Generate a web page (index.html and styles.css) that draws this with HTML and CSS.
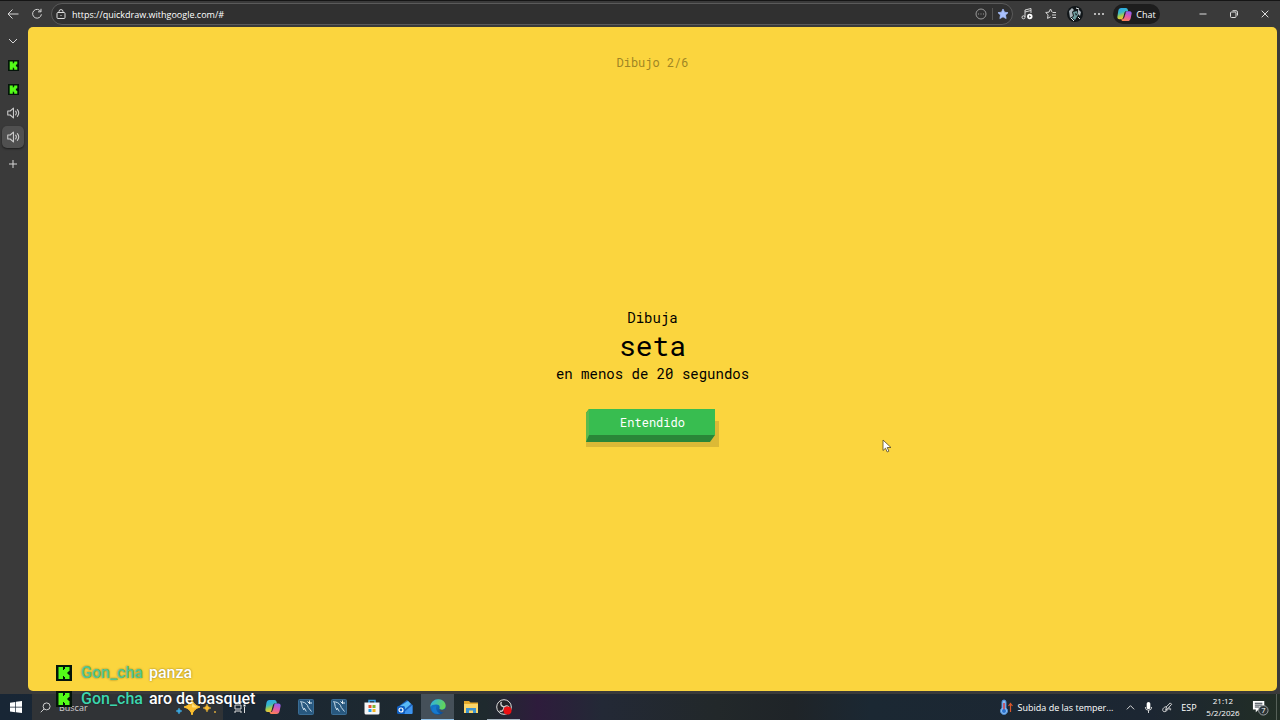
FILE: index.html
```html
<!DOCTYPE html>
<html lang="es">
<head>
  <meta charset="UTF-8" />
  <meta name="viewport" content="width=device-width, initial-scale=1.0" />
  <title>Quick, Draw!</title>
  <link rel="stylesheet" href="styles.css">
</head>
<body>
  <!-- shared icons -->
  <svg class="defs" width="0" height="0" aria-hidden="true">
    <defs>
      <linearGradient id="copA" x1="0" y1="0" x2="0.3" y2="1">
        <stop offset="0" stop-color="#2aa4ee" /><stop offset="0.45" stop-color="#38b8c8" /><stop offset="0.75" stop-color="#a8cf4a" /><stop offset="1" stop-color="#f5c43a" />
      </linearGradient>
      <linearGradient id="copB" x1="0.6" y1="0" x2="0.3" y2="1">
        <stop offset="0" stop-color="#8f62f0" /><stop offset="0.5" stop-color="#e35aa8" /><stop offset="1" stop-color="#fb8450" />
      </linearGradient>
      <linearGradient id="edgeA" x1="0" y1="0" x2="1" y2="0.3">
        <stop offset="0" stop-color="#2db0ea" /><stop offset="1" stop-color="#62d45a" />
      </linearGradient>
      <linearGradient id="edgeB" x1="0" y1="0" x2="0.6" y2="1">
        <stop offset="0" stop-color="#1a8fe0" /><stop offset="1" stop-color="#0c4f9c" />
      </linearGradient>
      <symbol id="kick" viewBox="0 0 16 16">
        <rect width="16" height="16" fill="#04140a" />
        <path d="M2.500 2h4.500v3h1V4h1V2h4.500v4h-1v1h-1v2h1v1h1v4H9v-2H8v-1H7v3H2.500z" fill="#53fc18" />
      </symbol>
      <symbol id="speaker" viewBox="0 0 16 16">
        <path d="M2 5.700h2.800L8.500 2.400v11.200L4.800 10.300H2zM11 5.800c1 1.300 1 3.100 0 4.400M13 4.200c1.900 2.300 1.900 5.300 0 7.600" fill="none" stroke="currentColor" stroke-width="1.200" stroke-linejoin="round" stroke-linecap="round" />
      </symbol>
      <symbol id="copilot" viewBox="0 0 16 16">
        <path d="M4.500 1h5c1.200 0 1.700.8 2 1.800L12 4.500H9.800c-1 0-1.500.6-1.800 1.500L6.500 11.500c-.3 1-.9 1.500-1.800 1.500H2.500C1 13 .2 12 .4 10.500l1-6.500C1.800 2 2.800 1 4.500 1z" fill="url(#copA)" />
        <path d="M11.500 15h-5c-1.200 0-1.800-.8-2-2h1c1.200 0 1.700-.5 2-1.500L9.200 5.800c.3-.9.900-1.300 1.700-1.300h2.600c1.600 0 2.300 1.100 2.100 2.500l-1 5c-.4 2-1.400 3-3.100 3z" fill="url(#copB)" />
        <path d="M8.600 6.300h.8l-1.500 5h-.8z" fill="#1c1f28" opacity=".5" />
      </symbol>
      <symbol id="workbench" viewBox="0 0 16 16">
        <rect x=".5" y=".5" width="15" height="15" rx="1" fill="#28587f" stroke="#3a6d95" />
        <path d="M2 2.800l2.500.2c3 .5 5 2.500 5.800 5.500l3.200 4M3.500 3.500l.7 4 1.600 3.500.5-2 2 3.500" fill="none" stroke="#c8dcea" stroke-width="1" />
        <path d="M9.500 2.500L12 5M11.500 1.500v2.500h2.500" fill="none" stroke="#e3eef5" stroke-width="1" />
      </symbol>
      <symbol id="star" viewBox="0 0 16 16">
        <path d="M8 1.300l2 4.300 4.700.6-3.400 3.200.9 4.700L8 11.800l-4.200 2.300.9-4.700L1.300 6.200 6 5.600z" stroke-linejoin="round" />
      </symbol>
    </defs>
  </svg>

  <header class="toolbar">
    <button class="tool" aria-label="Atrás"><svg class="icon" viewBox="0 0 12 12"><path d="M11.500 6H1M5.500 1.500L1 6l4.500 4.500" /></svg></button>
    <button class="tool" aria-label="Actualizar"><svg class="icon" viewBox="0 0 12 12"><path d="M9.800 3.500A4.400 4.400 0 1 0 10.400 6.300M10 .8v3H7" /></svg></button>
    <form class="address">
      <svg class="lock" viewBox="0 0 10 10" aria-hidden="true"><rect x="1" y="3.500" width="8" height="6" rx="1" /><path d="M3 3.500V2.600a2 2 0 0 1 4 0v.9M5 6v1" /></svg>
      <input type="text" aria-label="Dirección" value="https://quickdraw.withgoogle.com/#" />
      <button type="button" class="mini dim" aria-label="Más"><svg class="icon" viewBox="0 0 12 12"><circle cx="6" cy="6" r="5" /><path d="M3 6h1M5.500 6h1M8 6h1" /></svg></button>
      <span class="divider"></span>
      <button type="button" class="mini fav" aria-label="Favorito"><svg class="icon" viewBox="0 0 16 16"><use href="#star" /></svg></button>
    </form>
    <div class="extras">
      <button class="tool" aria-label="Música"><svg class="icon" viewBox="0 0 12 12"><path d="M4 9V2l6-1.500V5M4 4l6-1.500" /><circle cx="2.500" cy="9.300" r="1.500" /><circle cx="8.800" cy="8.500" r="2.700" fill="#fff" stroke="none" /><path d="M8.200 7.300l1.800 1.200-1.800 1.200z" fill="#333" stroke="none" /></svg></button>
      <button class="tool" aria-label="Favoritos"><svg class="icon" viewBox="0 0 12 12"><path d="M7 4L5.500 1 4 4.100.7 4.500l2.400 2.300-.6 3.600 3-1.600M7.500 4.500H11M7 7h4M7.500 9.500H11" /></svg></button>
      <button class="tool" aria-label="Perfil"><svg class="avatar" viewBox="0 0 16 16"><circle cx="8" cy="8" r="8" fill="#111619" /><path d="M2 5l3-3 2 2-2 2 1 4-3 2zM11 3l3 3-1 4-2-2z" fill="#aab4ba" /><path d="M6 6l4-1 1 4-3 5-3-2 2-2z" fill="#6c9a9c" /><path d="M8 7l2 1-1 2z" fill="#0c1014" /><path d="M4 12l3 3M11 11l2 2M9 2l3 1" stroke="#e5eaec" /></svg></button>
      <button class="tool" aria-label="Menú"><svg class="icon" viewBox="0 0 12 12"><g fill="#e0e0e0" stroke="none"><circle cx="2" cy="6" r="1" /><circle cx="6" cy="6" r="1" /><circle cx="10" cy="6" r="1" /></g></svg></button>
      <button class="chat-btn"><svg viewBox="0 0 16 16"><use href="#copilot" /></svg>Chat</button>
    </div>
    <div class="window-btns">
      <button aria-label="Minimizar"><svg viewBox="0 0 8 8"><path d="M.5 4h7" /></svg></button>
      <button aria-label="Restaurar"><svg viewBox="0 0 8 8"><rect x=".5" y="2" width="5.500" height="5.500" rx="1" /><path d="M2.500.7h3.500q1.500 0 1.500 1.500v3.300" /></svg></button>
      <button aria-label="Cerrar"><svg viewBox="0 0 8 8"><path d="M.7.7l6.600 6.600M7.300.7L.7 7.300" /></svg></button>
    </div>
  </header>

  <div class="browser">
    <nav class="tabs">
      <button aria-label="Pestañas"><svg class="icon" viewBox="0 0 12 12"><path d="M2 4l4 4 4-4" /></svg></button>
      <button aria-label="Kick"><svg class="kick" viewBox="0 0 16 16"><use href="#kick" /></svg></button>
      <button aria-label="Kick"><svg class="kick" viewBox="0 0 16 16"><use href="#kick" /></svg></button>
      <button aria-label="Pestaña con audio"><svg class="sound" viewBox="0 0 16 16"><use href="#speaker" /></svg></button>
      <button class="active" aria-label="Quick, Draw!"><svg class="sound" viewBox="0 0 16 16"><use href="#speaker" /></svg></button>
      <button class="new-tab" aria-label="Nueva pestaña"><svg class="icon" viewBox="0 0 12 12"><path d="M6 2v8M2 6h8" /></svg></button>
    </nav>

    <main class="page">
      <p class="round">Dibujo 2/6</p>
      <section class="challenge">
        <p>Dibuja</p>
        <h1>seta</h1>
        <p>en menos de 20 segundos</p>
        <button class="ok-btn">
          <svg viewBox="0 0 134 39" aria-hidden="true">
            <path d="M8 12h125v26H0V32z" fill="#dcb936" />
            <path d="M3 0h126v26l-5 7H0V4z" fill="#2a8638" />
            <path d="M0 4l3-4v26l-3 7z" fill="#5bba4e" />
            <path d="M3 0h126v26H3z" fill="#38bd50" />
          </svg>
          <span>Entendido</span>
        </button>
      </section>
    </main>
  </div>

  <footer class="taskbar">
    <button class="start" aria-label="Inicio"><svg viewBox="0 0 12 12"><path d="M0 1.700l5.300-.8v4.800H0zM6 .8L12 0v5.700H6zM0 6.400h5.300v4.800L0 10.400zM6 6.400h6V12l-6-.8z" fill="#fff" /></svg></button>
    <label class="search">
      <svg class="glass" viewBox="0 0 12 12"><circle cx="7.200" cy="4.800" r="3.800" /><path d="M4.500 7.500L.8 11.200" /></svg>
      <input type="text" placeholder="Buscar" aria-label="Buscar" />
      <svg class="sparkle" viewBox="0 0 42 16"><path d="M17 0q1 6 8 8-7 2-8 8-1-6-8-8 7-2 8-8z" fill="#fdbf2d" stroke="#fdbf2d" /><path d="M17 2q1 5 6 6-5 1-6 0z" fill="#ffe07a" /><path d="M32 5q.6 3.400 4 4-3.400.6-4 4-.6-3.400-4-4 3.400-.6 4-4z" fill="#f7ba32" stroke="#f7ba32" stroke-width=".5" /><path d="M4 9q.5 2.500 3 3-2.500.5-3 3-.5-2.500-3-3 2.500-.5 3-3z" fill="#3ba8e0" stroke="#3ba8e0" stroke-width=".5" /><circle cx="40" cy="13" r="1" fill="#d9aa3c" /></svg>
    </label>
    <div class="apps">
      <button aria-label="Vista de tareas"><svg class="small" viewBox="0 0 12 12"><path d="M1 0v2h6V0M1 4h6v4H1zM1 12v-2h6v2M10.500 0v3M10.500 6v6" fill="none" stroke="#ddd" /><path d="M9.500 3.500h2v2h-2z" fill="#fff" /></svg></button>
      <button aria-label="Copilot"><svg viewBox="0 0 16 16"><use href="#copilot" /></svg></button>
      <button aria-label="MySQL Workbench"><svg viewBox="0 0 16 16"><use href="#workbench" /></svg></button>
      <button aria-label="MySQL Workbench"><svg viewBox="0 0 16 16"><use href="#workbench" /></svg></button>
      <button aria-label="Microsoft Store"><svg viewBox="0 0 16 16"><path d="M5 4V1.500h6V4" fill="none" stroke="#39a7e8" stroke-width="1.500" /><path d="M.5 3.500h15V14q0 1.500-1.500 1.500H2Q.5 15.500.5 14z" fill="#f5f6f7" /><path d="M4.500 6h3v3h-3z" fill="#e8502e" /><path d="M8.500 6h3v3h-3z" fill="#7db72f" /><path d="M4.500 10h3v3h-3z" fill="#27a0e6" /><path d="M8.500 10h3v3h-3z" fill="#f5b51c" /></svg></button>
      <button aria-label="Outlook"><svg viewBox="0 0 16 16"><path d="M2 7l8-6 5.500 5v8q0 1-1 1H3q-1 0-1-1z" fill="#1b62bd" /><path d="M3 7l8-5 3 3-7 6z" fill="#58b9f5" /><path d="M15.500 6v8q0 1-1 1H5z" fill="#3d94ee" /><rect y="7" width="8" height="8" rx="1.500" fill="#0f5fc2" /><circle cx="4" cy="11" r="2" fill="none" stroke="#fff" stroke-width="1.200" /></svg></button>
      <button class="active" aria-label="Edge"><svg viewBox="0 0 16 16"><circle cx="8" cy="8" r="7.700" fill="url(#edgeB)" /><path d="M.3 8C.8 3.500 4 .3 8.500.3c4.300 0 7.200 3 7.200 6.400 0 2.600-1.900 4-4 4-1.700 0-2.500-.6-2.300-1.200.6-.8.7-3.900-2.700-4C3.500 5.300 1 6 .3 8z" fill="url(#edgeA)" /><path d="M9.400 9.500c.2 1.500 3 2 5.700.8l.9 1.700-2 1.500c-2.500.3-4.800-1.500-4.600-4z" fill="#455059" /><path d="M6.300 7c-.8 3 .5 6.500 4 7.500-3 1-6 .5-8-2C1.500 10 3 7 6.300 7z" fill="#1679ce" /></svg></button>
      <button aria-label="Explorador de archivos"><svg viewBox="0 0 16 16"><path d="M1 2h5l1.500 1.500H15V14H1z" fill="#e4a92c" /><path d="M1 5h14v9H1z" fill="#fbd669" /><path d="M3 9h10v5h-3v-2.500H6V14H3z" fill="#3d94d0" /></svg></button>
      <button class="running" aria-label="OBS Studio"><svg viewBox="0 0 16 16"><circle cx="8" cy="8" r="7.300" fill="#25252a" stroke="#ddd" stroke-width="1" /><path d="M8 8c-3-1-4-3-2.500-5M8 8c3-2 5-1 5 1M8 8c0 3-2 5-4.500 4" fill="none" stroke="#d5d5d5" stroke-width="1.300" /><circle cx="11.500" cy="11.500" r="4" fill="#ec1014" /></svg></button>
    </div>
    <div class="tray">
      <button class="weather">
        <svg viewBox="0 0 14 16"><path d="M3 3a2 2 0 0 1 4 0v6a3.500 3.500 0 1 1-4 0z" fill="#8dbdf0" stroke="#4b90dc" /><path d="M5 4v7" stroke="#d13b40" stroke-width="1.500" /><circle cx="5" cy="12" r="2" fill="#2a72ce" /><path d="M11.500 13V5M9.500 7l2-2.500 2 2.500" fill="none" stroke="#d9572b" stroke-width="1.200" /></svg>
        Subida de las temper...
      </button>
      <button aria-label="Iconos ocultos"><svg class="line" viewBox="0 0 12 12"><path d="M2 8l4-4 4 4" /></svg></button>
      <button aria-label="Micrófono"><svg class="line" viewBox="0 0 12 12"><rect x="4" y="0" width="4" height="8" rx="2" fill="#fff" stroke="none" /><path d="M2.500 5.500q0 3.500 3.500 3.500t3.500-3.500M6 9v3" /></svg></button>
      <button class="pen" aria-label="Lápiz"><svg class="line" viewBox="0 0 12 12"><path d="M4 9l1-4 4-4 1.500 1.500-4 4.500zM5 5C0 5.500-.5 11 3 10.500S7 6 8.500 6.500 7 10 10 8" /></svg></button>
      <button class="lang">ESP</button>
      <button class="clock"><time>21:12</time><span>5/2/2026</span></button>
      <button class="notif" aria-label="7 notificaciones"><svg viewBox="0 0 18 18"><path d="M1 2h12v9H7l-3 3v-3H1z" fill="#fff" /><path d="M3 4.500h8M3 6.500h8M3 8.500h5" stroke="#26313a" /><circle cx="12" cy="12" r="5" fill="#2b3437" stroke="#a0a5a7" /><text x="12" y="15" text-anchor="middle">7</text></svg></button>
    </div>
  </footer>

  <!-- stream chat, floats over everything -->
  <ul class="stream-chat">
    <li class="fading"><svg viewBox="0 0 16 16"><use href="#kick" /></svg><b>Gon_cha</b><span>panza</span></li>
    <li><svg viewBox="0 0 16 16"><use href="#kick" /></svg><b>Gon_cha</b><span>aro de basquet</span></li>
  </ul>

  <svg class="cursor" viewBox="0 0 10 14" aria-hidden="true"><path d="M1 1v10.500l2.500-2.300L5.200 13l1.700-.8-1.700-3.700H9z" fill="#fff" stroke="#55491f" stroke-width=".8" /></svg>
</body>
</html>
```
FILE: styles.css
```css
* {
  box-sizing: border-box;
}
body {
  margin: 0;
  height: 100vh;
  display: flex;
  flex-direction: column;
  overflow: hidden;
  position: relative;
  background: #3a3a3a;
  color: #fff;
  font-family: "Open Sans", "Noto Sans", sans-serif;
  font-size: 9px;
}
button, input {
  font: inherit;
  color: inherit;
  background: none;
  border: none;
  padding: 0;
  margin: 0;
}
button {
  display: flex;
  align-items: center;
  justify-content: center;
  cursor: pointer;
}
svg {
  display: block;
  flex: none;
}
.defs {
  position: absolute;
}
.icon {
  width: 12px;
  height: 12px;
  fill: none;
  stroke: #d6d6d6;
  stroke-width: 1;
}

/* toolbar */
.toolbar {
  display: flex;
  align-items: center;
  height: 27px;
  padding-left: 1px;
  border-top: 1px solid #151515;
}
.tool {
  width: 24px;
  height: 24px;
}
.address {
  flex: 1;
  display: flex;
  align-items: center;
  height: 22px;
  margin-left: 2px;
  padding: 0 3px 0 4px;
  background: #303030;
  border: 1px solid #5a5a5a;
  border-radius: 11px;
}
.lock {
  width: 10px;
  height: 10px;
  margin-right: 6px;
  fill: none;
  stroke: #ddd;
}
.address input {
  flex: 1;
  min-width: 0;
  outline: none;
}
.mini {
  width: 12px;
}
.dim .icon {
  stroke: #999;
}
.fav .icon {
  fill: #a9c1ff;
  stroke: #a9c1ff;
}
.divider {
  width: 1px;
  height: 12px;
  margin: 0 4px 0 5px;
  background: #555;
}
.extras {
  display: flex;
  align-items: center;
  margin-left: 2px;
}
.avatar {
  width: 16px;
  height: 16px;
}
.chat-btn {
  gap: 4px;
  width: 47px;
  height: 20px;
  margin-left: 2px;
  background: #1d1d1d;
  border-radius: 10px;
}
.chat-btn svg {
  width: 15px;
  height: 15px;
}
.window-btns {
  display: flex;
  margin-left: 27px;
}
.window-btns button {
  width: 31px;
  height: 24px;
}
.window-btns svg {
  width: 8px;
  height: 8px;
  fill: none;
  stroke: #ddd;
}

/* browser body */
.browser {
  flex: 1;
  min-height: 0;
  display: flex;
  padding: 0 3px 3px 0;
}
.tabs {
  width: 28px;
  padding: 3px 2px;
}
.tabs button {
  width: 22px;
  height: 22px;
  margin-bottom: 2px;
  border-radius: 5px;
  color: #cfcfcf;
}
.tabs .active {
  background: #505050;
  box-shadow: 0 1px 2px #1c1c1c;
}
.tabs .new-tab {
  margin-top: 5px;
}
.kick {
  width: 11px;
  height: 11px;
}
.sound {
  width: 14px;
  height: 14px;
}

/* game */
.page {
  flex: 1;
  display: flex;
  flex-direction: column;
  background: #fbd53e;
  border-radius: 5px;
  color: #000;
  font-family: "Roboto Mono", "DejaVu Sans Mono", monospace;
  text-align: center;
}
.page p, .page h1 {
  margin: 0;
}
.round {
  padding-top: 27px;
  font-size: 12px;
  line-height: 16px;
  color: #9f8524;
}
.challenge {
  flex: 1;
  display: flex;
  flex-direction: column;
  align-items: center;
  justify-content: center;
  padding-bottom: 5px;
  font-size: 14px;
  line-height: 20px;
}
.challenge h1 {
  font-size: 28px;
  font-weight: normal;
  line-height: 36px;
}
.ok-btn {
  position: relative;
  align-items: flex-start;
  width: 134px;
  height: 39px;
  margin-top: 25px;
  color: #fff;
  font-size: 12px;
  line-height: 27px;
}
.ok-btn svg {
  position: absolute;
  inset: 0;
}
.ok-btn span {
  position: relative;
}

/* taskbar */
.taskbar {
  display: flex;
  height: 26px;
  background: linear-gradient(90deg, #182635 0%, #1b2733 20%, #1f2a2e 38%, #2e1c3c 42%, #232936 47%, #22282a 56%, #1f2428 62%, #1b2833 68%, #1c2632 90%, #222e25 100%);
}
.start {
  width: 32px;
}
.start svg {
  width: 12px;
  height: 12px;
}
.search {
  display: flex;
  align-items: center;
  width: 191px;
  padding: 0 6px 0 8px;
  background: #303336;
}
.glass {
  width: 11px;
  height: 11px;
  margin-right: 8px;
  fill: none;
  stroke: #ddd;
}
.search input {
  flex: 1;
  min-width: 0;
}
.search input::placeholder {
  color: #d0d0d0;
}
.sparkle {
  width: 42px;
  height: 16px;
}
.apps {
  display: flex;
}
.apps button {
  width: 33px;
  border-bottom: 1px solid transparent;
}
.apps svg {
  width: 16px;
  height: 16px;
}
.apps .small {
  width: 12px;
  height: 12px;
}
.apps .active {
  background: #455059;
  border-color: #8fc1e8;
}
.apps .running {
  border-color: #a5b3bf;
}
.tray {
  display: flex;
  margin-left: auto;
  padding-right: 3px;
}
.tray > button {
  width: 18px;
}
.tray .line {
  width: 11px;
  height: 11px;
  fill: none;
  stroke: #e5e5e5;
}
.tray .weather {
  gap: 5px;
  width: 126px;
  margin-right: 2px;
  white-space: nowrap;
}
.weather svg {
  width: 14px;
  height: 16px;
}
.tray .pen {
  width: 20px;
}
.tray .lang {
  width: 24px;
}
.tray .clock {
  flex-direction: column;
  width: 44px;
  font-size: 8px;
  line-height: 12px;
}
.tray .notif {
  width: 32px;
  border-right: 1px solid #566058;
}
.notif svg {
  width: 17px;
  height: 17px;
}
.notif text {
  fill: #fff;
  font-size: 8px;
}

/* chat overlay */
.stream-chat {
  position: absolute;
  left: 56px;
  bottom: 8px;
  margin: 0;
  padding: 0;
  list-style: none;
  font: 500 16px/26px Roboto, sans-serif;
}
.stream-chat li {
  display: flex;
  align-items: center;
  text-shadow: 0 0 2px rgba(0, 0, 0, 0.5);
}
.stream-chat svg {
  width: 16px;
  height: 16px;
  margin-right: 9px;
}
.stream-chat b {
  margin-right: 6px;
  font-weight: 500;
  color: #3cd6ae;
}
.fading b {
  color: #50c690;
}
.cursor {
  position: absolute;
  left: 882px;
  top: 439px;
  width: 10px;
  height: 14px;
}
```
